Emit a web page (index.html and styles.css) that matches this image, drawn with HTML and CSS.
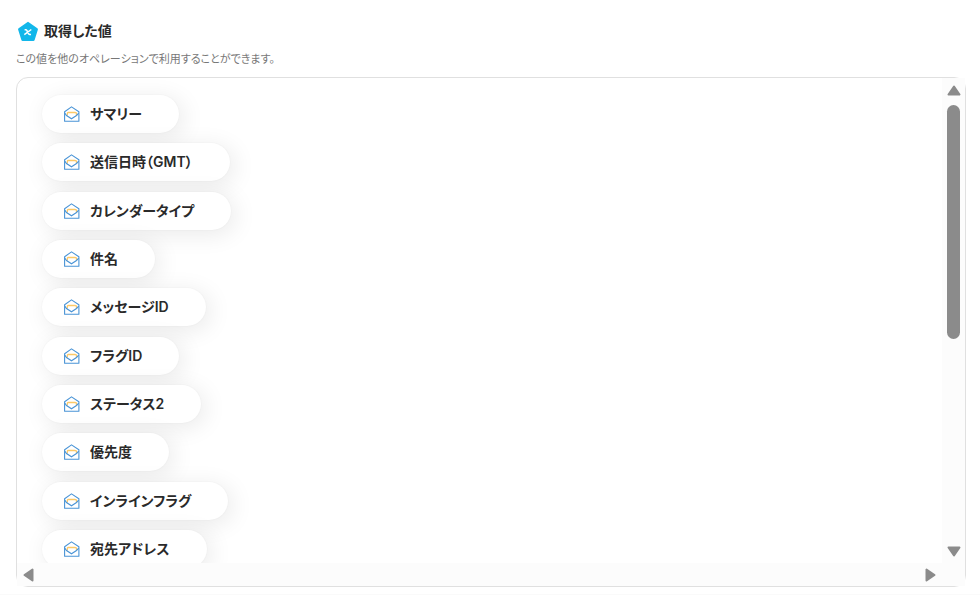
FILE: index.html
```html
<!DOCTYPE html>
<html lang="ja">
<head>
    <meta charset="UTF-8">
    <meta name="viewport" content="width=device-width, initial-scale=1.0">
    <title>取得した値</title>
    <link rel="stylesheet" href="styles.css">
</head>
<body>
    <!-- Mail icon shared by every item -->
    <svg class="sprite" aria-hidden="true">
        <symbol id="mail" viewBox="0 0 16 16">
            <path d="M.6 15.300V5.700L7.500.9l7.400 4.800v9.600z" fill="#fff" stroke="#4a94d6" stroke-width="1.100" stroke-linejoin="round"/>
            <path d="M3.300 9.500V7.500q0-1 1-1h6.700q1.500 0 1.500 1v2" fill="none" stroke="#fcc968" stroke-width="1.300"/>
            <path d="M.8 7.200 2.500 9.500l5 3.300 5-3.300 2.200-2.300" fill="none" stroke="#4a94d6" stroke-width="1.100"/>
        </symbol>
    </svg>

    <main class="output">
        <!-- Header -->
        <div class="header">
            <svg class="header-icon" viewBox="0 0 20 20" aria-hidden="true">
                <path d="M10 2.200 18.600 8.400 15.400 18.600H4.600L1.400 8.400z" fill="#12b7ea" stroke="#12b7ea" stroke-width="2.600" stroke-linejoin="round"/>
                <path d="M6.600 8.700h1.100q.8 0 1.100.6l1.900 3.600q.3.600 1.100.6h1.200M13.300 8.500 6.300 13.700" fill="none" stroke="#fff" stroke-width="1.500"/>
            </svg>
            <h1>取得した値</h1>
        </div>
        <p class="description">この値を他のオペレーションで利用することができます。</p>

        <!-- Value list -->
        <div class="panel">
            <div class="viewport">
                <ul class="values">
                    <li><button type="button" class="value"><svg class="mail"><use href="#mail"/></svg>サマリー</button></li>
                    <li><button type="button" class="value"><svg class="mail"><use href="#mail"/></svg>送信日時（GMT）</button></li>
                    <li><button type="button" class="value"><svg class="mail"><use href="#mail"/></svg>カレンダータイプ</button></li>
                    <li><button type="button" class="value"><svg class="mail"><use href="#mail"/></svg>件名</button></li>
                    <li><button type="button" class="value"><svg class="mail"><use href="#mail"/></svg>メッセージID</button></li>
                    <li><button type="button" class="value"><svg class="mail"><use href="#mail"/></svg>フラグID</button></li>
                    <li><button type="button" class="value"><svg class="mail"><use href="#mail"/></svg>ステータス2</button></li>
                    <li><button type="button" class="value"><svg class="mail"><use href="#mail"/></svg>優先度</button></li>
                    <li><button type="button" class="value"><svg class="mail"><use href="#mail"/></svg>インラインフラグ</button></li>
                    <li><button type="button" class="value"><svg class="mail"><use href="#mail"/></svg>宛先アドレス</button></li>
                </ul>
            </div>

            <!-- Scroll bars -->
            <div class="bar bar-vertical">
                <button type="button" class="arrow" aria-label="上へ"><svg viewBox="0 0 14 11"><path d="M7 1.500 12.500 9.500h-11z"/></svg></button>
                <div class="track"><div class="thumb"></div></div>
                <button type="button" class="arrow" aria-label="下へ"><svg viewBox="0 0 14 11"><path d="M7 9.500 12.500 1.500h-11z"/></svg></button>
            </div>
            <div class="bar bar-horizontal">
                <button type="button" class="arrow" aria-label="左へ"><svg viewBox="0 0 11 14"><path d="M1.500 7 9.500 1.500v11z"/></svg></button>
                <button type="button" class="arrow" aria-label="右へ"><svg viewBox="0 0 11 14"><path d="M9.500 7 1.500 1.500v11z"/></svg></button>
            </div>
        </div>
    </main>
</body>
</html>
```
FILE: styles.css
```css
/* General Styles */
* {
    box-sizing: border-box;
}

body {
    margin: 0;
    background-color: #fff;
    color: #2a2a2a;
    font-family: Inter, "Noto Sans CJK JP", sans-serif;
    font-feature-settings: "palt";
}

button {
    border: none;
    font: inherit;
    color: inherit;
    font-feature-settings: inherit;
    cursor: pointer;
}

.sprite {
    display: none;
}

.output {
    padding: 20px 14px 7px 16px;
    border-bottom: 1px solid #fafafa;
}

/* Header */
.header {
    display: flex;
    align-items: center;
    gap: 6px;
    padding-left: 2px;
}

.header-icon {
    width: 20px;
    height: 20px;
}

.header h1 {
    margin: 0;
    font-size: 14px;
    font-weight: 600;
    line-height: 22px;
}

.description {
    margin: 8px 0 9px;
    font-size: 11px;
    line-height: 18px;
    color: #777;
}

/* Panel */
.panel {
    display: grid;
    grid-template-columns: 1fr 23px;
    grid-template-rows: 485px 23px;
    border: 1px solid #e0e0e0;
    border-radius: 12px;
}

.viewport {
    overflow: hidden;
    border-top-left-radius: 11px;
}

.values {
    display: flex;
    flex-direction: column;
    justify-content: space-between;
    align-items: flex-start;
    height: 507px;
    margin: 0;
    padding: 17px 25px;
    list-style: none;
}

.value {
    display: flex;
    align-items: center;
    gap: 10px;
    height: 38px;
    padding: 0 37px 0 22px;
    border-radius: 19px;
    background-color: #fff;
    box-shadow: 0 0 2px rgba(0, 0, 0, 0.05), 4px 4px 24px rgba(0, 0, 0, 0.09);
    font-size: 14px;
    font-weight: 600;
    line-height: 20px;
}

.mail {
    width: 16px;
    height: 16px;
}

/* Scroll bars */
.bar {
    display: flex;
    justify-content: space-between;
    align-items: center;
    background-color: #fcfcfc;
}

.bar-vertical {
    grid-row: 1 / 3;
    grid-column: 2;
    flex-direction: column;
    padding: 7px 0 29px;
}

.bar-horizontal {
    padding: 0 6px;
}

.arrow {
    display: flex;
    padding: 0;
    background: none;
}

.arrow svg {
    width: 14px;
    height: 11px;
    fill: #8b8b8b;
    stroke: #8b8b8b;
    stroke-width: 2;
    stroke-linejoin: round;
}

.bar-horizontal .arrow svg {
    width: 11px;
    height: 14px;
}

.track {
    flex: 1;
    width: 13px;
    padding: 9px 0;
}

.thumb {
    height: 234px;
    border-radius: 7px;
    background-color: #8b8b8b;
}
```
